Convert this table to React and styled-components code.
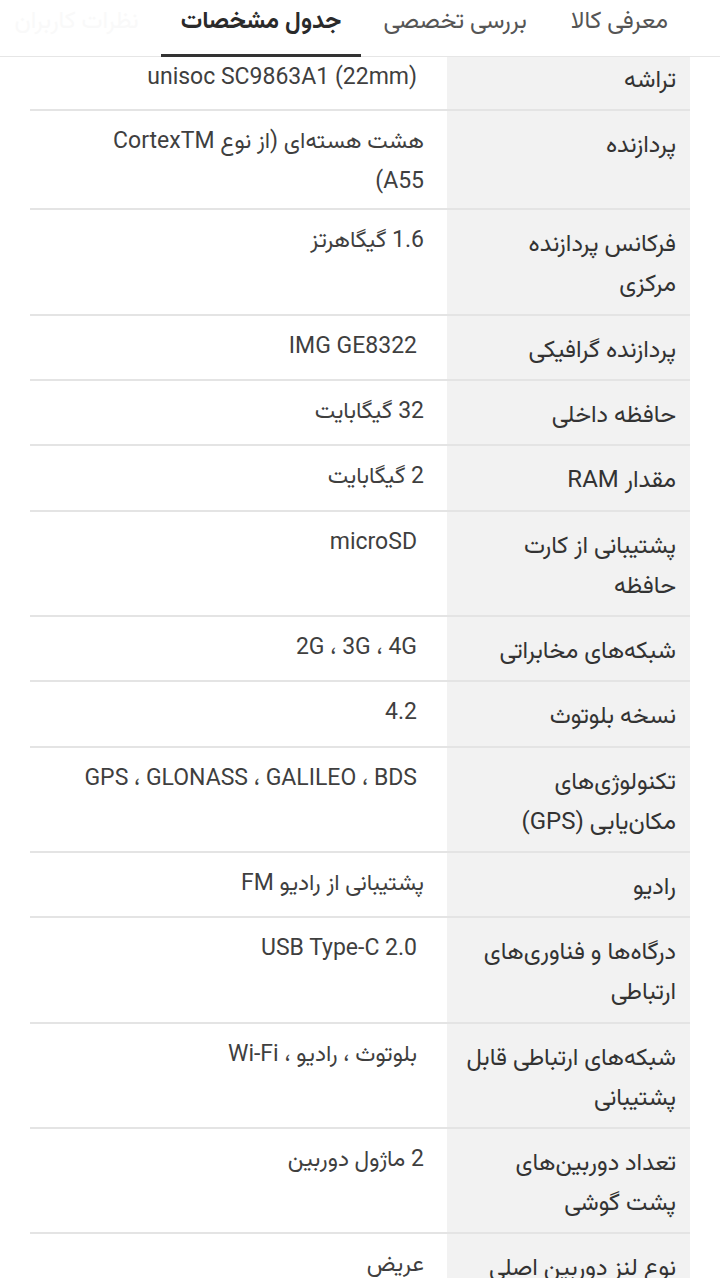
import React from "react";
import styled, { createGlobalStyle } from "styled-components";

const GlobalStyle = createGlobalStyle`
  html, body { margin: 0; padding: 0; background: #ffffff; }
  body {
    font-family: Roboto, Vazirmatn, "Noto Sans Arabic", "Noto Naskh Arabic", "DejaVu Sans", sans-serif;
    color: #3b3b3b;
  }
`;

const Page = styled.div`
  direction: rtl;
  width: 720px;
  background: #fff;
`;

const TabBar = styled.nav`
  display: flex;
  align-items: stretch;
  height: 56px;
  padding-right: 30px;
  border-bottom: 1px solid #e6e6e6;
  background: #fff;
`;

const Tab = styled.div`
  display: flex;
  align-items: center;
  padding: 0 ${(p) => (p.$active ? "20px" : "22px")} 10px;
  font-size: 24px;
  white-space: nowrap;
  color: ${(p) => (p.$active ? "#2a2a2a" : p.$faded ? "#f9f9f9" : "#555555")};
  font-weight: ${(p) => (p.$active ? 700 : 400)};
  border-bottom: 3px solid ${(p) => (p.$active ? "#333333" : "transparent")};
  margin-bottom: -1px;
`;

const Table = styled.div`
  margin: 0 30px;
  display: flex;
  flex-direction: column;
`;

const Row = styled.div`
  display: grid;
  grid-template-columns: 243px 1fr;
  border-bottom: 2px solid #e4e4e4;
`;

const Label = styled.div`
  background: #f2f2f2;
  padding: ${(p) => (p.$clip ? "2px" : "13px")} 14px 10.35px 6px;
  font-size: 24px;
  line-height: 40px;
  color: #333333;
`;

const Line = styled.span`
  display: block;
  white-space: nowrap;
`;

const Value = styled.div`
  padding: ${(p) => (p.$clip ? "0px" : "10px")} ${(p) => (p.$inset ? "30px" : "23px")} 7px 10px;
  font-size: 23px;
  line-height: 40px;
  color: #3f3f3f;
`;

const specs = [
  { label: ["تراشه"], value: ["unisoc SC9863A1 (22mm)"], inset: true, clip: true },
  { label: ["پردازنده"], value: ["هشت هسته‌ای (از نوع CortexTM", "A55)"] },
  { label: ["فرکانس پردازنده", "مرکزی"], value: ["1.6 گیگاهرتز"] },
  { label: ["پردازنده گرافیکی"], value: ["IMG GE8322"], inset: true },
  { label: ["حافظه داخلی"], value: ["32 گیگابایت"] },
  { label: ["مقدار RAM"], value: ["2 گیگابایت"] },
  { label: ["پشتیبانی از کارت", "حافظه"], value: ["microSD"], inset: true },
  { label: ["شبکه‌های مخابراتی"], value: ["2G ، 3G ، 4G"], inset: true },
  { label: ["نسخه بلوتوث"], value: ["4.2"], inset: true },
  { label: ["تکنولوژی‌های", "مکان‌یابی (GPS)"], value: ["GPS ، GLONASS ، GALILEO ، BDS"], inset: true },
  { label: ["رادیو"], value: ["پشتیبانی از رادیو FM"] },
  { label: ["درگاه‌ها و فناوری‌های", "ارتباطی"], value: ["USB Type-C 2.0"], inset: true },
  { label: ["شبکه‌های ارتباطی قابل", "پشتیبانی"], value: ["بلوتوث ، رادیو ، Wi-Fi"], inset: true },
  { label: ["تعداد دوربین‌های", "پشت گوشی"], value: ["2 ماژول دوربین"] },
  { label: ["نوع لنز دوربین اصلی"], value: ["عریض"] },
];

export default function App() {
  return (
    <Page>
      <GlobalStyle />
      <TabBar>
        <Tab>معرفی کالا</Tab>
        <Tab>بررسی تخصصی</Tab>
        <Tab $active>جدول مشخصات</Tab>
        <Tab $faded>نظرات کاربران</Tab>
      </TabBar>
      <Table>
        {specs.map((s, i) => (
          <Row key={i}>
            <Label $clip={s.clip}>
              {s.label.map((l, j) => (
                <Line key={j}>{l}</Line>
              ))}
            </Label>
            <Value $clip={s.clip} $inset={s.inset}>
              {s.value.map((v, j) => (
                <Line key={j}>{v}</Line>
              ))}
            </Value>
          </Row>
        ))}
      </Table>
    </Page>
  );
}
